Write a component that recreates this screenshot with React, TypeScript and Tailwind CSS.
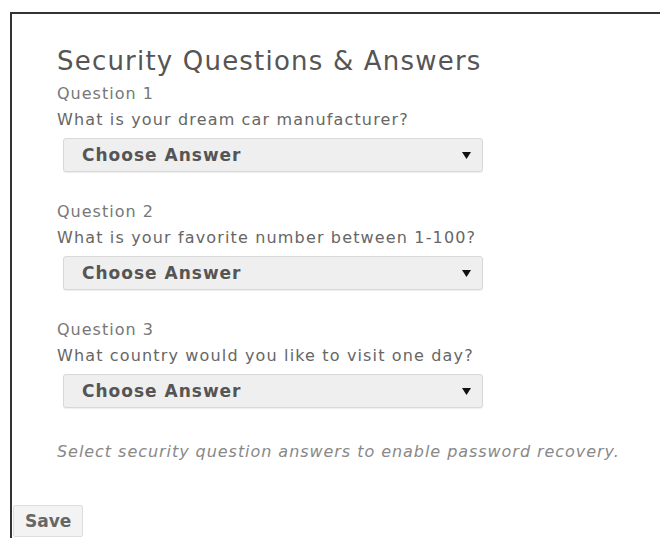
import { useState } from 'react';

// ─── Types ────────────────────────────────────────────────────────────────────

interface SecurityQuestion {
  id: number;
  prompt: string;
}

// ─── Constants ────────────────────────────────────────────────────────────────

const QUESTIONS: SecurityQuestion[] = [
  { id: 1, prompt: 'What is your dream car manufacturer?' },
  { id: 2, prompt: 'What is your favorite number between 1-100?' },
  { id: 3, prompt: 'What country would you like to visit one day?' },
];

const FONT = "font-['DejaVu_Sans',_'Liberation_Sans',_sans-serif]";

// ─── Sub-components ───────────────────────────────────────────────────────────

function AnswerSelect({ value }: { value: string }) {
  return (
    <button
      type="button"
      className="ml-[6px] mt-[7px] flex h-[34px] w-[420px] items-center justify-between rounded-[3px] border border-[#d8d8d8] bg-[#efefef] pl-[18px] pr-[10px] shadow-[0_1px_1px_rgba(0,0,0,0.07)]"
    >
      <span className="text-[17px] leading-none font-bold tracking-[1px] text-[#555]">{value}</span>
      <svg width="9" height="7" viewBox="0 0 9 7" className="mr-[1px]">
        <polygon points="0,0 9,0 4.5,7" fill="#111" />
      </svg>
    </button>
  );
}

function QuestionBlock({ q, answer }: { q: SecurityQuestion; answer: string }) {
  return (
    <div className="flex flex-col">
      <p className="text-[16px] leading-[22px] tracking-[1px] text-[#777]">Question {q.id}</p>
      <p className="mt-[4px] text-[16px] leading-[22px] tracking-[1.15px] text-[#666]">{q.prompt}</p>
      <AnswerSelect value={answer} />
    </div>
  );
}

// ─── Page ─────────────────────────────────────────────────────────────────────

export default function App() {
  const [answers] = useState<string[]>(QUESTIONS.map(() => 'Choose Answer'));

  return (
    <div className={`min-h-screen overflow-hidden bg-white pl-[10px] pt-[12px] ${FONT}`}>
      <div className="h-[526px] w-[700px] border-l-2 border-t-2 border-[#333]">

        {/* ── Questions ── */}
        <section className="pl-[45px] pt-[32px]">
          <h1 className="text-[26px] leading-[30px] tracking-[1.2px] text-[#555]">
            Security Questions &amp; Answers
          </h1>

          <div className="mt-[7px] flex flex-col gap-[29px]">
            {QUESTIONS.map((q, i) => (
              <QuestionBlock key={q.id} q={q} answer={answers[i]} />
            ))}
          </div>

          <p className="mt-[33px] text-[16px] leading-[22px] tracking-[0.95px] italic text-[#888]">
            Select security question answers to enable password recovery.
          </p>
        </section>

        {/* ── Actions ── */}
        <button
          type="button"
          className="ml-[1px] mt-[42px] h-[32px] rounded-[2px] border border-[#ddd] bg-[#f3f3f3] px-[11px] text-[17px] font-bold leading-none text-[#666]"
        >
          Save
        </button>
      </div>
    </div>
  );
}
